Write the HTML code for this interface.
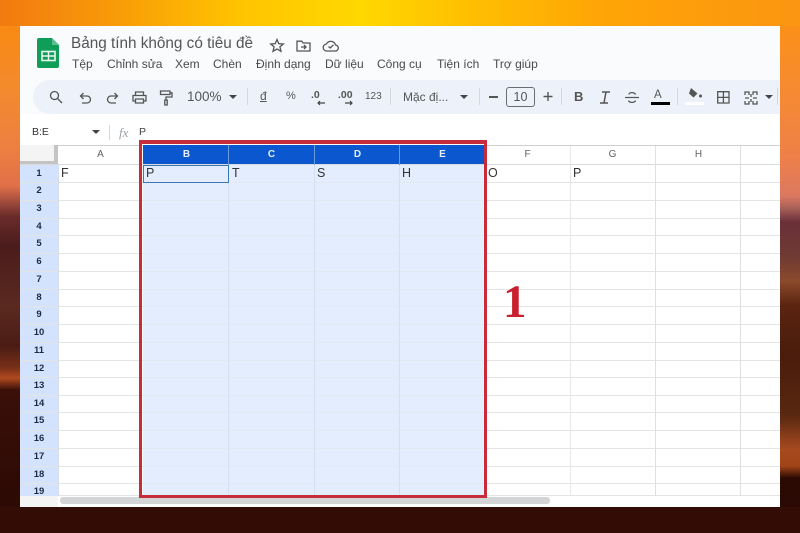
<!DOCTYPE html>
<html><head><meta charset="utf-8">
<style>
html,body{margin:0;padding:0;width:800px;height:533px;overflow:hidden;background:#2a0804}
*{box-sizing:border-box}
body{position:relative;font-family:"Liberation Sans","Noto Sans CJK JP",sans-serif;color:#3c4043}
.a{position:absolute}
.t{position:absolute;white-space:nowrap;line-height:1}
.v{position:absolute;width:1px}
.h{position:absolute;height:1px}
.rn{position:absolute;left:20px;width:38px;text-align:center;font-size:9.5px;font-weight:bold;color:#1f2a44;line-height:1}
.ch{position:absolute;top:150px;font-size:10px;line-height:1;text-align:center;color:#5f6368;width:85px}
.chs{position:absolute;top:150px;font-size:10px;font-weight:bold;line-height:1;text-align:center;color:#e8f0fe;width:85px}
.c{position:absolute;top:167px;font-size:12.5px;line-height:1;color:#333}
svg{position:absolute;overflow:visible}
.s{fill:none;stroke:#555;stroke-width:1.3}
</style></head>
<body>
<div class="a" style="left:0;top:0;width:800px;height:26px;background:linear-gradient(90deg,#f27a10 0%,#f89a08 14%,#ffc400 30%,#ffd800 45%,#ffc000 58%,#ffa506 75%,#fb9512 100%)"></div>
<div class="a" style="left:0;top:26px;width:20px;height:507px;background:linear-gradient(180deg,#f98a12 0,#f38a2c 60px,#ee8040 120px,#e07048 160px,#a85040 174px,#6a2c2a 190px,#4a1c1c 220px,#5a2a20 280px,#4a1c14 320px,#7a3018 342px,#b04a20 352px,#3a1008 364px,#2a0804 507px)"></div>
<div class="a" style="left:780px;top:26px;width:20px;height:507px;background:linear-gradient(180deg,#fb9018 0,#f68a34 70px,#ee8048 130px,#dc7860 170px,#a86058 182px,#6a3038 196px,#6e3a34 230px,#8a4a2c 255px,#5a2410 280px,#4a1c0c 330px,#5a2810 390px,#a84a20 424px,#a04418 440px,#2c0a04 452px,#2a0804 507px)"></div>
<div class="a" style="left:0;top:507px;width:800px;height:26px;background:#330c06"></div>

<div class="a" style="left:20px;top:26px;width:760px;height:481px;background:#fff"></div>
<div class="a" style="left:20px;top:26px;width:760px;height:119px;background:#f9fbfd"></div>

<!-- Sheets logo -->
<svg style="left:37px;top:38px" width="23" height="30" viewBox="0 0 23 30">
<path d="M2 0H15L22 7V28a2 2 0 0 1-2 2H2a2 2 0 0 1-2-2V2A2 2 0 0 1 2 0Z" fill="#0f9d58"/>
<path d="M15 0L22 7H15Z" fill="#5cc08c"/>
<rect x="5" y="13.5" width="13" height="9" fill="none" stroke="#e8f5ee" stroke-width="1.6"/>
<path d="M11.5 13.5V22.5M5 18H18" stroke="#e8f5ee" stroke-width="1.5"/>
</svg>

<div class="t" style="left:71px;top:36px;font-size:15.3px;color:#555">Bảng tính không có tiêu đề</div>
<svg style="left:269px;top:38px" width="16" height="15" viewBox="0 0 16 15"><path class="s" d="M8 1.5L9.8 5.7 14.3 6 10.9 8.9 12 13.3 8 11 4 13.3 5.1 8.9 1.7 6 6.2 5.7Z"/></svg>
<svg style="left:296px;top:40px" width="15" height="12" viewBox="0 0 15 12"><path class="s" d="M1 2V11H14V3H7L5.8 1.2H1Z"/><path class="s" d="M5 7H10M8 5L10 7 8 9"/></svg>
<svg style="left:323px;top:39px" width="16" height="13" viewBox="0 0 16 13"><path class="s" d="M4 12H12A3 3 0 0 0 12.6 6 5 5 0 0 0 3.4 5 3.5 3.5 0 0 0 4 12Z"/><path class="s" d="M5.5 7.5L7.2 9 10.5 5.8"/></svg>

<div class="t" style="left:72px;top:58px;font-size:12px;color:#4a4a4a">Tệp</div>
<div class="t" style="left:107px;top:58px;font-size:12px;color:#4a4a4a">Chỉnh sửa</div>
<div class="t" style="left:175px;top:58px;font-size:12px;color:#4a4a4a">Xem</div>
<div class="t" style="left:213px;top:58px;font-size:12px;color:#4a4a4a">Chèn</div>
<div class="t" style="left:256px;top:58px;font-size:12px;color:#4a4a4a">Định dạng</div>
<div class="t" style="left:325px;top:58px;font-size:12px;color:#4a4a4a">Dữ liệu</div>
<div class="t" style="left:377px;top:58px;font-size:12px;color:#4a4a4a">Công cụ</div>
<div class="t" style="left:437px;top:58px;font-size:12px;color:#4a4a4a">Tiện ích</div>
<div class="t" style="left:493px;top:58px;font-size:12px;color:#4a4a4a">Trợ giúp</div>

<!-- Toolbar -->
<div class="a" style="left:33px;top:80px;width:747px;height:34px;background:#edf2fa;border-radius:17px 0 0 17px"></div>
<svg style="left:49px;top:90px" width="14" height="14" viewBox="0 0 14 14"><circle class="s" cx="5.5" cy="5.5" r="4"/><path class="s" d="M8.5 8.5L13 13" stroke-width="1.7"/></svg>
<svg style="left:79px;top:92px" width="13" height="12" viewBox="0 0 13 12"><path class="s" d="M4.5 1L1.500 4 4.500 7M1.500 4H8a3.500 3.500 0 0 1 0 7H3"/></svg>
<svg style="left:106px;top:92px" width="13" height="12" viewBox="0 0 13 12"><path class="s" d="M8.500 1L11.500 4 8.500 7M11.500 4H5a3.500 3.500 0 0 0 0 7H10"/></svg>
<svg style="left:132px;top:91px" width="15" height="13" viewBox="0 0 15 13"><path class="s" d="M3.500 4V1H11.500V4M3.500 10H1V4.500H14V10H11.500M3.500 8H11.500V12H3.500Z"/></svg>
<svg style="left:159px;top:90px" width="14" height="16" viewBox="0 0 14 16"><path class="s" d="M1.500 1H11V4.500H1.500ZM11 2.800H13V7H7V10M5.800 10H8.200V15H5.800Z"/></svg>
<div class="t" style="left:187px;top:90px;font-size:13.5px;color:#555">100%</div>
<svg style="left:229px;top:95px" width="9" height="5"><path d="M0 0H8L4 4Z" fill="#444"/></svg>
<div class="a" style="left:247px;top:88px;width:1px;height:17px;background:#d5d8dc"></div>
<div class="t" style="left:260px;top:90px;font-size:12px;color:#555;text-decoration:underline">đ</div>
<div class="t" style="left:286px;top:91px;font-size:11px;color:#555">%</div>
<div class="t" style="left:311px;top:90px;font-size:10.500px;font-weight:bold;color:#555">.0</div>
<svg style="left:317px;top:100px" width="9" height="6"><path d="M8 3H1M3 1L1 3 3 5" fill="none" stroke="#444" stroke-width="1.200"/></svg>
<div class="t" style="left:338px;top:90px;font-size:10.500px;font-weight:bold;color:#555">.00</div>
<svg style="left:344px;top:100px" width="9" height="6"><path d="M1 3H8M6 1L8 3 6 5" fill="none" stroke="#444" stroke-width="1.200"/></svg>
<div class="t" style="left:365px;top:92px;font-size:10px;color:#555">123</div>
<div class="a" style="left:390px;top:88px;width:1px;height:17px;background:#d5d8dc"></div>
<div class="t" style="left:403px;top:91px;font-size:12px;color:#555">Mặc đị...</div>
<svg style="left:460px;top:95px" width="9" height="5"><path d="M0 0H8L4 4Z" fill="#444"/></svg>
<div class="a" style="left:479px;top:88px;width:1px;height:17px;background:#d5d8dc"></div>
<div class="a" style="left:489px;top:96px;width:9px;height:1.500px;background:#555"></div>
<div class="a" style="left:506px;top:87px;width:29px;height:20px;border:1px solid #6a6e72;border-radius:3px;text-align:center;font-size:12.500px;line-height:18px;color:#555">10</div>
<svg style="left:543px;top:92px" width="10" height="10"><path d="M5 0V9M.5 4.500H9.500" stroke="#555" stroke-width="1.400"/></svg>
<div class="a" style="left:561px;top:88px;width:1px;height:17px;background:#d5d8dc"></div>
<div class="t" style="left:574px;top:90px;font-size:13px;font-weight:bold;color:#555">B</div>
<svg style="left:599px;top:91px" width="12" height="13"><path d="M3 1H11M1 12H9M7 1L5 12" stroke="#555" stroke-width="1.500" fill="none"/></svg>
<svg style="left:625px;top:91px" width="14" height="13"><path class="s" d="M0 6.500H14M10.500 3.500C9.500 1 4 1 4 3.500M3.500 9.500C4 12 10 12 10.500 9.500"/></svg>
<div class="t" style="left:654px;top:90px;font-size:11.500px;color:#555">A</div>
<div class="a" style="left:651px;top:102px;width:19px;height:3px;background:#000"></div>
<div class="a" style="left:677px;top:88px;width:1px;height:17px;background:#d5d8dc"></div>
<svg style="left:688px;top:88px" width="17" height="13"><path d="M3 0L9.500 5.500 5.500 9.500 1 5.500Z" fill="#555"/><circle cx="12.500" cy="8" r="1.500" fill="#555"/></svg>
<div class="a" style="left:685px;top:102px;width:19px;height:3px;background:#fff"></div>
<svg style="left:717px;top:91px" width="13" height="13"><path class="s" d="M.7.7H12V12H.7ZM6.400.7V12M.7 6.400H12"/></svg>
<svg style="left:744px;top:91px" width="14" height="14"><path class="s" d="M1 4V1H5V4M9 4V1H13V4M1 10V13H5V10M9 10V13H13V10M1 7H5M9 7H13M7 3V6M7 8V11" stroke-width="1.200"/></svg>
<svg style="left:765px;top:95px" width="9" height="5"><path d="M0 0H8L4 4Z" fill="#444"/></svg>
<div class="a" style="left:777px;top:88px;width:1px;height:17px;background:#d5d8dc"></div>

<!-- Formula bar -->
<div class="a" style="left:20px;top:114px;width:760px;height:31px;background:#fff"></div>
<div class="t" style="left:32px;top:127px;font-size:10.500px;color:#333">B:E</div>
<svg style="left:92px;top:130px" width="9" height="5"><path d="M0 0H8L4 4Z" fill="#444"/></svg>
<div class="a" style="left:109px;top:125px;width:1px;height:15px;background:#d5d8dc"></div>
<div class="t" style="left:119px;top:126px;font-size:13px;font-style:italic;font-family:'Liberation Serif',serif;color:#9aa0a6">fx</div>
<div class="t" style="left:139px;top:127px;font-size:10.500px;color:#444">P</div>

<!-- Grid backgrounds -->
<div class="a" style="left:20px;top:145px;width:38px;height:20px;background:#f4f4f4;border-right:4px solid #c4c4c4;border-bottom:4px solid #c4c4c4"></div>
<div class="a" style="left:58px;top:145px;width:722px;height:1px;background:#d0d0d0"></div>
<div class="a" style="left:20px;top:165px;width:38px;height:331px;background:#d3e3fd"></div>
<div class="a" style="left:143px;top:165px;width:342px;height:331px;background:#e3edfd"></div>
<div class="a" style="left:143px;top:145px;width:342px;height:20px;background:#0b57d0"></div>

<!-- Row lines -->
<div class="h" style="left:20px;top:164px;width:760px;background:#dadada"></div>
<div class="h" style="left:20px;top:182px;width:760px;background:#e4e4e4"></div>
<div class="h" style="left:20px;top:200px;width:760px;background:#e4e4e4"></div>
<div class="h" style="left:20px;top:218px;width:760px;background:#e4e4e4"></div>
<div class="h" style="left:20px;top:235px;width:760px;background:#e4e4e4"></div>
<div class="h" style="left:20px;top:253px;width:760px;background:#e4e4e4"></div>
<div class="h" style="left:20px;top:271px;width:760px;background:#e4e4e4"></div>
<div class="h" style="left:20px;top:289px;width:760px;background:#e4e4e4"></div>
<div class="h" style="left:20px;top:306px;width:760px;background:#e4e4e4"></div>
<div class="h" style="left:20px;top:324px;width:760px;background:#e4e4e4"></div>
<div class="h" style="left:20px;top:342px;width:760px;background:#e4e4e4"></div>
<div class="h" style="left:20px;top:360px;width:760px;background:#e4e4e4"></div>
<div class="h" style="left:20px;top:377px;width:760px;background:#e4e4e4"></div>
<div class="h" style="left:20px;top:395px;width:760px;background:#e4e4e4"></div>
<div class="h" style="left:20px;top:412px;width:760px;background:#e4e4e4"></div>
<div class="h" style="left:20px;top:430px;width:760px;background:#e4e4e4"></div>
<div class="h" style="left:20px;top:448px;width:760px;background:#e4e4e4"></div>
<div class="h" style="left:20px;top:466px;width:760px;background:#e4e4e4"></div>
<div class="h" style="left:20px;top:483px;width:760px;background:#e4e4e4"></div>
<div class="h" style="left:58px;top:495px;width:722px;background:#e4e4e4"></div>
<!-- selected area tint over row lines -->
<div class="a" style="left:143px;top:165px;width:342px;height:331px;background:#e3edfd;opacity:.6"></div>

<!-- Col lines -->
<div class="v" style="left:58px;top:165px;height:331px;background:#d6deec"></div>
<div class="v" style="left:228px;top:165px;height:331px;background:#d4dff0"></div>
<div class="v" style="left:314px;top:165px;height:331px;background:#d4dff0"></div>
<div class="v" style="left:399px;top:165px;height:331px;background:#d4dff0"></div>
<div class="v" style="left:570px;top:146px;height:350px;background:#e8e8e8"></div>
<div class="v" style="left:655px;top:146px;height:350px;background:#e0e0e0"></div>
<div class="v" style="left:740px;top:146px;height:350px;background:#e0e0e0"></div>
<div class="v" style="left:228px;top:145px;height:20px;background:#6a9ae0"></div>
<div class="v" style="left:314px;top:145px;height:20px;background:#6a9ae0"></div>
<div class="v" style="left:399px;top:145px;height:20px;background:#6a9ae0"></div>

<!-- Column headings -->
<div class="ch" style="left:58px">A</div>
<div class="chs" style="left:144px">B</div>
<div class="chs" style="left:229px">C</div>
<div class="chs" style="left:315px">D</div>
<div class="chs" style="left:400px">E</div>
<div class="ch" style="left:485px">F</div>
<div class="ch" style="left:570px">G</div>
<div class="ch" style="left:656px">H</div>

<!-- Row numbers -->
<div class="rn" style="top:169px">1</div>
<div class="rn" style="top:186px">2</div>
<div class="rn" style="top:204px">3</div>
<div class="rn" style="top:222px">4</div>
<div class="rn" style="top:239px">5</div>
<div class="rn" style="top:257px">6</div>
<div class="rn" style="top:275px">7</div>
<div class="rn" style="top:293px">8</div>
<div class="rn" style="top:310px">9</div>
<div class="rn" style="top:328px">10</div>
<div class="rn" style="top:346px">11</div>
<div class="rn" style="top:364px">12</div>
<div class="rn" style="top:381px">13</div>
<div class="rn" style="top:399px">14</div>
<div class="rn" style="top:416px">15</div>
<div class="rn" style="top:434px">16</div>
<div class="rn" style="top:452px">17</div>
<div class="rn" style="top:470px">18</div>
<div class="rn" style="top:487px">19</div>

<!-- Cells -->
<div class="c" style="left:61px">F</div>
<div class="c" style="left:146px">P</div>
<div class="c" style="left:232px">T</div>
<div class="c" style="left:317px">S</div>
<div class="c" style="left:402px">H</div>
<div class="c" style="left:488px">O</div>
<div class="c" style="left:573px">P</div>
<div class="a" style="left:143px;top:165px;width:86px;height:18px;border:1.500px solid #3a78b4"></div>

<!-- Scrollbar -->
<div class="a" style="left:20px;top:496px;width:760px;height:11px;background:#fff"></div>
<div class="a" style="left:20px;top:496px;width:38px;height:11px;background:#f4f4f4"></div>
<div class="a" style="left:60px;top:497px;width:490px;height:7px;border-radius:3px;background:#d2d4d6"></div>

<!-- Red box -->
<div class="a" style="left:139px;top:140px;width:348px;height:358px;border:3px solid #c72c3b;border-top-width:4px"></div>
<div class="t" style="left:503px;top:279px;font-family:'Liberation Serif',serif;font-weight:bold;font-size:47px;color:#c8202f">1</div>
</body></html>
